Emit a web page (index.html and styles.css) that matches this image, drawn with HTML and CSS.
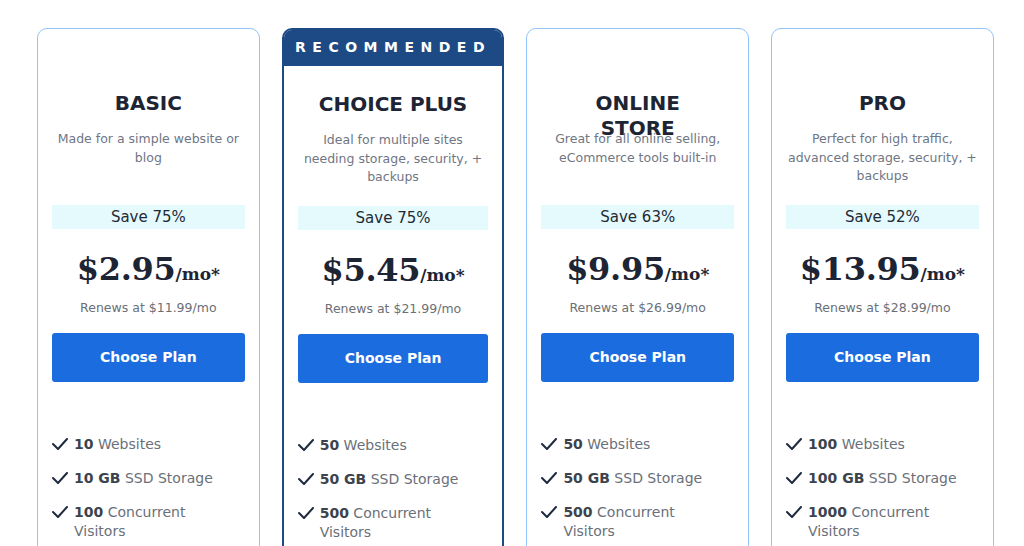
FILE: index.html
```html
<!DOCTYPE html>
<html lang="en">
<head>
<meta charset="utf-8">
<title>Plans</title>
<link rel="stylesheet" href="styles.css">
</head>
<body>
<div class="plans">
  <div class="card">
    <div class="card-top"></div>
    <div class="card-body">
      <h2 class="title">BASIC</h2>
      <p class="desc">Made for a simple website or blog</p>
      <div class="save">Save 75%</div>
      <div class="price"><span class="amount">$2.95</span><span class="per">/mo*</span></div>
      <div class="renew">Renews at $11.99/mo</div>
      <a class="btn">Choose Plan</a>
      <ul class="features">
        <li><svg class="check" viewBox="0 0 16 12"><polyline points="1,6 6,11 15,1"/></svg><span><b>10</b> Websites</span></li>
        <li><svg class="check" viewBox="0 0 16 12"><polyline points="1,6 6,11 15,1"/></svg><span><b>10 GB</b> SSD Storage</span></li>
        <li><svg class="check" viewBox="0 0 16 12"><polyline points="1,6 6,11 15,1"/></svg><span><b>100</b> Concurrent Visitors</span></li>
      </ul>
    </div>
  </div>
  <div class="card featured">
    <div class="card-top">RECOMMENDED</div>
    <div class="card-body">
      <h2 class="title">CHOICE PLUS</h2>
      <p class="desc">Ideal for multiple sites needing storage, security, + backups</p>
      <div class="save">Save 75%</div>
      <div class="price"><span class="amount">$5.45</span><span class="per">/mo*</span></div>
      <div class="renew">Renews at $21.99/mo</div>
      <a class="btn">Choose Plan</a>
      <ul class="features">
        <li><svg class="check" viewBox="0 0 16 12"><polyline points="1,6 6,11 15,1"/></svg><span><b>50</b> Websites</span></li>
        <li><svg class="check" viewBox="0 0 16 12"><polyline points="1,6 6,11 15,1"/></svg><span><b>50 GB</b> SSD Storage</span></li>
        <li><svg class="check" viewBox="0 0 16 12"><polyline points="1,6 6,11 15,1"/></svg><span><b>500</b> Concurrent Visitors</span></li>
      </ul>
    </div>
  </div>
  <div class="card">
    <div class="card-top"></div>
    <div class="card-body">
      <h2 class="title">ONLINE STORE</h2>
      <p class="desc">Great for all online selling, eCommerce tools built-in</p>
      <div class="save">Save 63%</div>
      <div class="price"><span class="amount">$9.95</span><span class="per">/mo*</span></div>
      <div class="renew">Renews at $26.99/mo</div>
      <a class="btn">Choose Plan</a>
      <ul class="features">
        <li><svg class="check" viewBox="0 0 16 12"><polyline points="1,6 6,11 15,1"/></svg><span><b>50</b> Websites</span></li>
        <li><svg class="check" viewBox="0 0 16 12"><polyline points="1,6 6,11 15,1"/></svg><span><b>50 GB</b> SSD Storage</span></li>
        <li><svg class="check" viewBox="0 0 16 12"><polyline points="1,6 6,11 15,1"/></svg><span><b>500</b> Concurrent Visitors</span></li>
      </ul>
    </div>
  </div>
  <div class="card">
    <div class="card-top"></div>
    <div class="card-body">
      <h2 class="title">PRO</h2>
      <p class="desc">Perfect for high traffic, advanced storage, security, + backups</p>
      <div class="save">Save 52%</div>
      <div class="price"><span class="amount">$13.95</span><span class="per">/mo*</span></div>
      <div class="renew">Renews at $28.99/mo</div>
      <a class="btn">Choose Plan</a>
      <ul class="features">
        <li><svg class="check" viewBox="0 0 16 12"><polyline points="1,6 6,11 15,1"/></svg><span><b>100</b> Websites</span></li>
        <li><svg class="check" viewBox="0 0 16 12"><polyline points="1,6 6,11 15,1"/></svg><span><b>100 GB</b> SSD Storage</span></li>
        <li><svg class="check" viewBox="0 0 16 12"><polyline points="1,6 6,11 15,1"/></svg><span><b>1000</b> Concurrent Visitors</span></li>
      </ul>
    </div>
  </div>
</div>
</body>
</html>
```
FILE: styles.css
```css
* { box-sizing: border-box; }
html, body { margin: 0; padding: 0; background: #fff; }
body {
  font-family: "DejaVu Sans", "Open Sans", sans-serif;
  color: #1d2433;
  overflow: hidden;
  height: 546px;
}
.plans {
  display: flex;
  gap: 22px;
  padding: 28px 0 0 37px;
}
.card {
  width: 222.7px;
  flex: none;
  border: 1px solid #93c3f8;
  border-radius: 10px;
  background: #fff;
  height: 560px;
}
.card-top { height: 36px; }
.featured {
  border: 2px solid #1d4a85;
  overflow: hidden;
}
.featured .card-top {
  background: #1d4a85;
  color: #fff;
  font-weight: 700;
  font-size: 14px;
  letter-spacing: 6.5px;
  text-align: center;
  line-height: 35px;
  padding-left: 0;
}
.card-body {
  padding: 26px 14px 0;
  text-align: center;
}
.title {
  margin: 0;
  height: 25px;
  font-size: 20px;
  line-height: 25px;
  font-weight: 700;
  color: #1d2433;
  position: relative;
  z-index: 1;
  padding: 0 18px;
}
.desc {
  margin: 14px 0 0;
  height: 54px;
  font-size: 12.5px;
  line-height: 18.5px;
  color: #6f7684;
  padding: 0;
}
.save {
  margin-top: 21px;
  height: 24px;
  line-height: 24px;
  background: #e4fafd;
  font-size: 15px;
  color: #232a35;
}
.price {
  margin-top: 18px;
  line-height: 44px;
  height: 44px;
  font-family: "DejaVu Serif", "Liberation Serif", serif;
  font-weight: 700;
  color: #1d2433;
}
.amount { font-size: 32px; letter-spacing: -0.3px; }
.per { font-size: 17px; }
.renew {
  margin-top: 8px;
  font-size: 12.5px;
  line-height: 18px;
  color: #6b6f76;
}
.btn {
  display: block;
  margin-top: 16px;
  height: 49px;
  line-height: 49px;
  background: #1b6cdf;
  border-radius: 3px;
  color: #fff;
  font-weight: 700;
  font-size: 14px;
}
.features {
  list-style: none;
  margin: 53px 0 0;
  padding: 0 12px 0 0;
  text-align: left;
}
.features li {
  display: flex;
  gap: 6px;
  font-size: 14px;
  line-height: 19px;
  color: #6a7079;
  margin-bottom: 15px;
}
.features b { color: #3d434c; font-weight: 700; }
.check {
  flex: none;
  width: 16px;
  height: 12px;
  margin-top: 3px;
  fill: none;
  stroke: #1e2a40;
  stroke-width: 2;
  stroke-linecap: round;
  stroke-linejoin: round;
}
```
